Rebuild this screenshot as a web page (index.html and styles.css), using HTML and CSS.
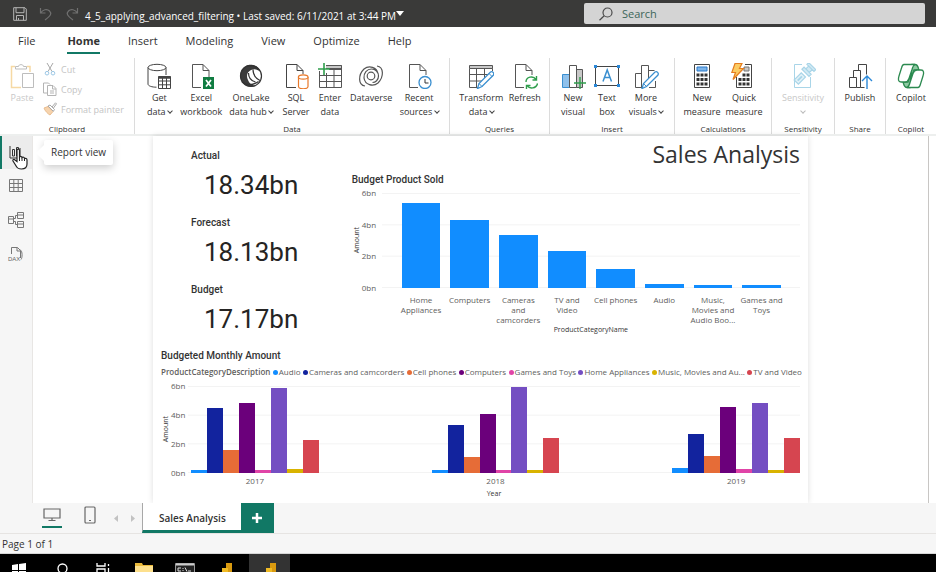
FILE: index.html
```html
<!DOCTYPE html>
<html lang="en">
<head>
    <meta charset="UTF-8">
    <meta name="viewport" content="width=device-width, initial-scale=1.0">
    <title>4_5_applying_advanced_filtering</title>
    <link rel="stylesheet" href="styles.css">
</head>
<body>

    <header class="titlebar">
        <button class="title-btn" aria-label="Save">
            <svg width="14" height="14" viewBox="0 0 14 14" fill="none" stroke="#b5b5b5"><path d="M.7.7h11.2l1.4 1.4v11.2H.7zM3 .7v5h8v-5M3.500 13.300V8.500h7v4.800M5.500 11v2"/></svg>
        </button>
        <button class="title-btn" aria-label="Undo">
            <svg width="14" height="14" viewBox="0 0 14 14" fill="none" stroke="#707070" stroke-width="1.200"><path d="M1.500 1v5h5M1.500 6C4 2.500 8 1.500 10.500 4s1.500 4.500-4.500 9"/></svg>
        </button>
        <button class="title-btn" aria-label="Redo">
            <svg width="14" height="14" viewBox="0 0 14 14" fill="none" stroke="#707070" stroke-width="1.200"><path d="M12.500 1v5h-5M12.500 6C10 2.500 6 1.500 3.500 4S2 8.500 8 13"/></svg>
        </button>
        <span class="file-name">4_5_applying_advanced_filtering • Last saved: 6/11/2021 at 3:44 PM</span>
        <svg class="caret" width="8" height="5" viewBox="0 0 8 5"><path d="M0 0h8L4 5z" fill="#fff"/></svg>
        <label class="search">
            <svg width="16" height="14" viewBox="0 0 16 14" fill="none" stroke="#4a4a4a" stroke-width="1.200"><circle cx="9.500" cy="5.500" r="4.500"/><path d="M6.200 8.800L1.500 13.300"/></svg>
            <input type="text" placeholder="Search" aria-label="Search">
        </label>
    </header>

    <nav class="menu">
        <a href="#">File</a>
        <a href="#" class="active">Home</a>
        <a href="#">Insert</a>
        <a href="#">Modeling</a>
        <a href="#">View</a>
        <a href="#">Optimize</a>
        <a href="#">Help</a>
    </nav>

    <div class="ribbon">
        <section class="group">
            <div class="tools clipboard">
                <button class="tool disabled">
                    <svg width="26" height="26" viewBox="0 0 26 26" fill="none"><path d="M12 24.500H2.500V3.500H6M18 3.500h3V9" stroke="#f6d9a4" stroke-width="1.500"/><path d="M6.500 6V3.500h3C9.500 1 14.500 1 14.500 3.500h3V6z" fill="#fff" stroke="#bdbdbd"/><path d="M13.500 10.500h11v14h-11z" fill="#fff" stroke="#bdbdbd"/></svg>
                    <span>Paste</span>
                </button>
                <div class="small-tools">
                    <button class="small-tool">
                        <svg width="14" height="14" viewBox="0 0 14 14" fill="none"><path d="M4 1l5 8.500M10 1L5 9.500" stroke="#a8a8a8"/><circle cx="4" cy="11.200" r="1.800" stroke="#9cc8e6"/><circle cx="10" cy="11.200" r="1.800" stroke="#9cc8e6"/></svg>
                        <span>Cut</span>
                    </button>
                    <button class="small-tool">
                        <svg width="14" height="14" viewBox="0 0 14 14" fill="none" stroke="#b4b4b4"><path d="M4 11H.5V1h5l1.500 1.500M4.500 3.500h5.500l3 3v7H4.500zM9.500 3.500V7H13M7 9h4M7 11h4"/></svg>
                        <span>Copy</span>
                    </button>
                    <button class="small-tool">
                        <svg width="14" height="14" viewBox="0 0 14 14" fill="none"><path d="M1 6l4-1.500 5 5L7 13C5 12 2 9 1 6z" fill="#f6d3ad" stroke="#e9bd90"/><path d="M5 4l2-1 4.500 4.500-1.200 1.800zM9 5l3.500-4.200 1 1L10.500 6" fill="#fff" stroke="#a8a8a8"/></svg>
                        <span>Format painter</span>
                    </button>
                </div>
            </div>
            <h2>Clipboard</h2>
        </section>

        <section class="group">
            <div class="tools data">
                <button class="tool">
                    <svg width="26" height="26" viewBox="0 0 26 26" fill="none" stroke="#444"><ellipse cx="11" cy="4.500" rx="9" ry="3.200"/><path d="M2 4.500v16.500c0 2 4 3.200 8.500 3.200M20 4.500V12"/><path d="M12.500 13.500h12v12h-12z" fill="#fff"/><path d="M12.500 14.500h12" stroke-width="2.500"/><path d="M12.500 18h12M12.500 21.800h12M16.500 14v11.500M20.500 14v11.500"/></svg>
                    <span>Get <b>data <i class="chev"></i></b></span>
                </button>
                <button class="tool">
                    <svg width="26" height="26" viewBox="0 0 26 26" fill="none" stroke="#555"><path d="M13 24.500H4.500v-23H15l6 6V14M15 1.500v6h6"/><path d="M15 14h11v12H15z" fill="#107c41" stroke="none"/><path d="M18 17l5 6.500M23 17l-5 6.500" stroke="#fff" stroke-width="1.700"/></svg>
                    <span>Excel workbook</span>
                </button>
                <button class="tool">
                    <svg width="26" height="26" viewBox="0 0 26 26" fill="none"><path d="M3 8C5 3.500 10 1 15 2c4 1 7 4 7.500 7-3-3-6.500-3.500-9.500-2-4 2-5 6-3 10 1 3 4 5.500 8 6-6 2-12 0-14.500-5C2 15 2 11 3 8z" fill="#3b3b3b"/><circle cx="13" cy="13" r="10.500" stroke="#333" stroke-width="1.200"/><path d="M8 3.500C12 1.500 18 3 20.500 7M10.500 10c0 5 3 8 7 9M15 6.500c0 5 3 9 7 11M4 19c4 3 10 4 16.500-.5" stroke="#333" stroke-width="1.200"/></svg>
                    <span>OneLake <b>data hub <i class="chev"></i></b></span>
                </button>
                <button class="tool">
                    <svg width="26" height="26" viewBox="0 0 26 26" fill="none" stroke="#444"><path d="M13 24.500H3.500v-23H14l6 6V11M14 1.500v6h6"/><g fill="#fff" stroke="#e8792b" stroke-width="1.200"><path d="M15.500 14v9.500c0 3 9.500 3 9.500 0V14"/><ellipse cx="20.200" cy="14" rx="4.800" ry="2.200"/></g></svg>
                    <span>SQL Server</span>
                </button>
                <button class="tool">
                    <svg width="26" height="26" viewBox="0 0 26 26" fill="none" stroke="#555"><path d="M9 2.500h15.500v3H9" fill="#c8c8c8"/><path d="M2.500 8v16.500h22v-22M2.500 12.500h22M2.500 18.500h22M9.500 10v14.500M17 5.500v19M12 6.500h12.500"/><path d="M7 0v12M1 6h12" stroke="#2f9e4c" stroke-width="1.600"/></svg>
                    <span>Enter data</span>
                </button>
                <button class="tool">
                    <svg width="26" height="26" viewBox="0 0 26 26" fill="none" stroke="#555" stroke-width="1.200"><circle cx="13" cy="13" r="3.800"/><path d="M19 3c7 1 7 11 1 17-5 4-13 2-14-5-.5-5 3-9 7.500-9 4 0 7 3 7 7s-3 6.500-6 6.500M7 23c-7-1-7-11-1-17 5-4 13-2 14 5"/></svg>
                    <span>Dataverse</span>
                </button>
                <button class="tool">
                    <svg width="26" height="26" viewBox="0 0 26 26" fill="none" stroke="#555"><path d="M12 24.500H3.500v-23H14l6 6V12M14 1.500v6h6"/><circle cx="19" cy="19.500" r="6" fill="#fff" stroke="#3a8fd0" stroke-width="1.300"/><path d="M19 16v4h3.500" stroke="#333"/></svg>
                    <span>Recent <b>sources <i class="chev"></i></b></span>
                </button>
            </div>
            <h2>Data</h2>
        </section>

        <section class="group">
            <div class="tools queries">
                <button class="tool">
                    <svg width="26" height="26" viewBox="0 0 26 26" fill="none" stroke="#555"><path d="M1.500 2.500h23v3h-23z" fill="#c8c8c8"/><path d="M1.500 5.500v19h9M24.500 5.500V8M1.500 11.500h19M1.500 18h13M8.500 5.500v19M16.500 5.500V15"/><path d="M9.500 25.500l1.500-5L22.500 9c2-1 4 1 3 3L14 23.500z" fill="#fff" stroke="#3a8fd0" stroke-width="1.300"/><path d="M11 20.500l3 3M21 10.500l3 3" stroke="#3a8fd0"/></svg>
                    <span>Transform <b>data <i class="chev"></i></b></span>
                </button>
                <button class="tool">
                    <svg width="26" height="26" viewBox="0 0 26 26" fill="none" stroke="#555"><path d="M12 24.500H3.500v-23H14l6 6V12M14 1.500v6h6"/><path d="M14 19c0-5 7-7 10-2.500M24.500 13v4h-4M25.500 20.500c-1 5-8 6-10.500 2M14.500 26.500v-4h4" stroke="#2f9e4c" stroke-width="1.400"/></svg>
                    <span>Refresh</span>
                </button>
            </div>
            <h2>Queries</h2>
        </section>

        <section class="group">
            <div class="tools insert">
                <button class="tool">
                    <svg width="26" height="26" viewBox="0 0 26 26" fill="none" stroke="#555"><path d="M2.500 11.500h7v13h-7z" fill="#8fc1ec" stroke="#3a8fd0"/><path d="M16.500 6.500h6v18h-6z" fill="#c8c8c8"/><path d="M9.500 2.500h7v22h-7z" fill="#fff"/><path d="M20 14v12M14 20h12" stroke="#2f9e4c" stroke-width="1.400"/></svg>
                    <span>New visual</span>
                </button>
                <button class="tool">
                    <svg width="26" height="26" viewBox="0 0 26 26" fill="none"><path d="M1.500 3.500h23v19h-23z" stroke="#444"/><path d="M0 2h3v3H0zM23 2h3v3h-3zM0 21h3v3H0zM23 21h3v3h-3z" fill="#2b88d8"/><path d="M9 18.500L13.200 7l4.300 11.500M10.500 14.500h5.500" stroke="#3a8fd0" stroke-width="1.500"/></svg>
                    <span>Text box</span>
                </button>
                <button class="tool">
                    <svg width="26" height="26" viewBox="0 0 26 26" fill="none" stroke="#555"><path d="M2.500 24.500v-14h6M8.500 24.500v-22h7v16M15.500 7.500h6M2.500 24.500H10M16 24.500h6.500V18"/><path d="M9 25.500l1.500-5L22 9c2-1 4 1 3 3L13.500 23.500z" fill="#fff" stroke="#3a8fd0" stroke-width="1.300"/><path d="M10.500 20.500l3 3" stroke="#3a8fd0"/></svg>
                    <span>More <b>visuals <i class="chev"></i></b></span>
                </button>
            </div>
            <h2>Insert</h2>
        </section>

        <section class="group">
            <div class="tools calc">
                <button class="tool">
                    <svg width="26" height="26" viewBox="0 0 26 26" fill="none"><path d="M5.500 1.500h15v23h-15z" stroke="#444"/><path d="M8 4h10v4H8z" fill="#7db5ea" stroke="#2b78c8"/><path d="M7.500 12h3M11.500 12h3M15.500 12h3M7.500 16.500h3M11.500 16.500h3M15.500 16.500h3M7.500 21h3M11.500 21h3M15.500 21h3" stroke="#333" stroke-width="3"/></svg>
                    <span>New measure</span>
                </button>
                <button class="tool">
                    <svg width="26" height="26" viewBox="0 0 26 26" fill="none"><path d="M14 1.500h6.500v23h-15V14" stroke="#444"/><path d="M13 4h5v4h-5z" fill="#c8c8c8" stroke="#777"/><path d="M11.500 12h3M15.500 12h3M7.500 16.500h3M11.500 16.500h3M15.500 16.500h3M7.500 21h3M11.500 21h3M15.500 21h3" stroke="#333" stroke-width="3"/><path d="M4 .5h7L8.500 5.500h4L2 16.500l2.500-7H.8z" fill="#fbcb62" stroke="#e57d1f" stroke-width="1.200"/></svg>
                    <span>Quick measure</span>
                </button>
            </div>
            <h2>Calculations</h2>
        </section>

        <section class="group">
            <div class="tools single">
                <button class="tool disabled">
                    <svg width="26" height="26" viewBox="0 0 26 26" fill="none" stroke="#a9d5e8"><path d="M12 1.500H4.500v23h16V14"/><g transform="rotate(-45 13 13)" stroke-width="1.200"><path d="M4 9.500h10v6H4z" fill="#e3f2f8"/><path d="M6 12.500h6" stroke-width="2"/><path d="M17 7.500h3v10h-3zM20 10h4v5h-4M24 7.500h2.500v10H24z" fill="#d3eaf4"/></g></svg>
                    <span>Sensitivity <i class="chev below"></i></span>
                </button>
            </div>
            <h2>Sensitivity</h2>
        </section>

        <section class="group">
            <div class="tools single">
                <button class="tool">
                    <svg width="26" height="26" viewBox="0 0 26 26" fill="none" stroke="#444"><path d="M2.500 14.500h7v10h-7zM6.500 14.500v-7h7v17H9.500M11.500 7.500v-6h8v10M13.500 24.500h4"/><path d="M20 26V13M15 18l5-5 5 5" stroke="#2b88d8" stroke-width="1.400"/></svg>
                    <span>Publish</span>
                </button>
            </div>
            <h2>Share</h2>
        </section>

        <section class="group">
            <div class="tools single">
                <button class="tool">
                    <svg width="28" height="26" viewBox="0 0 28 26" fill="none" stroke="#2c8a50" stroke-width="1.300"><path d="M15 1.500h3c2 0 3 2 3.500 4l.5 1.500h-5l-3 9z" fill="#8fcaa3"/><path d="M13 24.500h-3c-2 0-3-2-3.500-4L6 19h5l3-9z" fill="#8fcaa3"/><path d="M7 1.500h11c-2 1-2.500 3-3 5l-3 9c-1 3-2 3.500-4 3.500H4c-3 0-3-3-2-6l2.500-8C5 3 6 1.500 7 1.500z" fill="#fff"/><path d="M21 24.500H10c2-1 2.500-3 3-5l3-9c1-3 2-3.500 4-3.500h4c3 0 3 3 2 6l-2.500 8c-.5 2-1.500 3.500-2.500 3.500z" fill="#fff"/></svg>
                    <span>Copilot</span>
                </button>
            </div>
            <h2>Copilot</h2>
        </section>
    </div>

    <main class="workspace">
        <nav class="views">
            <button class="view active" aria-label="Report view">
                <svg width="16" height="16" viewBox="0 0 16 16" fill="none" stroke="#333"><path d="M2 1v12h12M4.500 4.500h2V11h-2zM8.500 2.500h2V11h-2zM12 3v8"/></svg>
                <svg class="cursor" width="18" height="22" viewBox="0 0 18 22"><path d="M5 1.500c1.500-1 2.500 0 2.500 1V9c1-1 2.500-.5 2.500.5 1-.7 2.500-.2 2.500 1 1.200-.5 2.500 0 2.500 1.500v4c0 3-1.500 5-5.500 5-3.500 0-4.500-1-6-4l-2.500-4c-.5-1.500 1-2 2-1L5 13.500V1.500z" fill="#fff" stroke="#222" stroke-width="1.200"/><path d="M7.500 9v4M10 9.500V13M12.500 10.500V13" stroke="#222"/></svg>
                <span class="tooltip">Report view</span>
            </button>
            <button class="view" aria-label="Table view">
                <svg width="16" height="16" viewBox="0 0 16 16" fill="none" stroke="#777"><path d="M1.500 1.500h13v12h-13zM1.500 5.500h13M1.500 9.500h13M5.800 1.500v12M10.200 1.500v12"/></svg>
            </button>
            <button class="view" aria-label="Model view">
                <svg width="16" height="16" viewBox="0 0 16 16" fill="none" stroke="#777"><path d="M.5 4.500h5v7h-5zM.5 7h5M9.500.5h6v6h-6zM9.500 3h6M9.500 9.500h6v6h-6zM9.500 12h6M5.500 6.500h2v-3h2M5.500 9.500h2v3h2"/></svg>
            </button>
            <button class="view" aria-label="DAX query view">
                <svg width="16" height="16" viewBox="0 0 16 16" fill="none" stroke="#777"><path d="M3.500 8V1.500h6l3 3V12M9 1.500V5h3.500M12.500 4c2 1 2 8 .5 9.500"/><text x="0" y="14.500" font-size="6" font-family="Liberation Sans, sans-serif" fill="#666" stroke="none">DAX</text></svg>
            </button>
        </nav>

        <div class="stage">
            <article class="report">
                <div class="kpis">
                    <section class="kpi"><h3>Actual</h3><p>18.34bn</p></section>
                    <section class="kpi"><h3>Forecast</h3><p>18.13bn</p></section>
                    <section class="kpi"><h3>Budget</h3><p>17.17bn</p></section>
                </div>

                <div class="top-right">
                    <h1>Sales Analysis</h1>
                    <section class="chart">
                        <h3>Budget Product Sold</h3>
                        <div class="plot sold">
                            <span class="y-title">Amount</span>
                            <div class="ticks"><span>6bn</span><span>4bn</span><span>2bn</span><span>0bn</span></div>
                            <div class="area">
                                <div class="bar audio" style="height: 89%"></div>
                                <div class="bar audio" style="height: 72%"></div>
                                <div class="bar audio" style="height: 56%"></div>
                                <div class="bar audio" style="height: 39%"></div>
                                <div class="bar audio" style="height: 20%"></div>
                                <div class="bar audio" style="height: 4%"></div>
                                <div class="bar audio" style="height: 3%"></div>
                                <div class="bar audio" style="height: 3%"></div>
                            </div>
                            <div class="x-labels">
                                <span>Home Appliances</span>
                                <span>Computers</span>
                                <span>Cameras and camcorders</span>
                                <span>TV and<br>Video</span>
                                <span>Cell phones</span>
                                <span>Audio</span>
                                <span>Music, Movies and Audio Boo...</span>
                                <span>Games and Toys</span>
                            </div>
                            <span class="x-title">ProductCategoryName</span>
                        </div>
                    </section>
                </div>

                <section class="chart monthly">
                    <h3>Budgeted Monthly Amount</h3>
                    <ul class="legend">
                        <li class="legend-title">ProductCategoryDescription</li>
                        <li><i class="dot audio"></i>Audio</li>
                        <li><i class="dot cameras"></i>Cameras and camcorders</li>
                        <li><i class="dot phones"></i>Cell phones</li>
                        <li><i class="dot computers"></i>Computers</li>
                        <li><i class="dot games"></i>Games and Toys</li>
                        <li><i class="dot home"></i>Home Appliances</li>
                        <li><i class="dot music"></i>Music, Movies and Au...</li>
                        <li><i class="dot tv"></i>TV and Video</li>
                    </ul>
                    <div class="plot years">
                        <span class="y-title">Amount</span>
                        <div class="ticks"><span>6bn</span><span>4bn</span><span>2bn</span><span>0bn</span></div>
                        <div class="area">
                            <div class="cluster">
                                <div class="bar audio" style="height: 3%"></div>
                                <div class="bar cameras" style="height: 75%"></div>
                                <div class="bar phones" style="height: 26%"></div>
                                <div class="bar computers" style="height: 81%"></div>
                                <div class="bar games" style="height: 3%"></div>
                                <div class="bar home" style="height: 98%"></div>
                                <div class="bar music" style="height: 5%"></div>
                                <div class="bar tv" style="height: 38%"></div>
                            </div>
                            <div class="cluster">
                                <div class="bar audio" style="height: 4%"></div>
                                <div class="bar cameras" style="height: 55%"></div>
                                <div class="bar phones" style="height: 18%"></div>
                                <div class="bar computers" style="height: 68%"></div>
                                <div class="bar games" style="height: 3%"></div>
                                <div class="bar home" style="height: 99%"></div>
                                <div class="bar music" style="height: 4%"></div>
                                <div class="bar tv" style="height: 40%"></div>
                            </div>
                            <div class="cluster">
                                <div class="bar audio" style="height: 6%"></div>
                                <div class="bar cameras" style="height: 45%"></div>
                                <div class="bar phones" style="height: 20%"></div>
                                <div class="bar computers" style="height: 76%"></div>
                                <div class="bar games" style="height: 5%"></div>
                                <div class="bar home" style="height: 80%"></div>
                                <div class="bar music" style="height: 3%"></div>
                                <div class="bar tv" style="height: 40%"></div>
                            </div>
                        </div>
                        <div class="x-labels"><span>2017</span><span>2018</span><span>2019</span></div>
                        <span class="x-title">Year</span>
                    </div>
                </section>
            </article>
        </div>
    </main>

    <div class="pages">
        <div class="layouts">
            <button class="layout active" aria-label="Desktop layout">
                <svg width="18" height="14" viewBox="0 0 18 14" fill="none" stroke="#666" stroke-width="1.200"><path d="M1 1h16v9H1zM5.500 12.500h7M9 10v2.500"/></svg>
            </button>
            <button class="layout" aria-label="Mobile layout">
                <svg width="12" height="18" viewBox="0 0 12 18" fill="none" stroke="#666" stroke-width="1.200"><rect x="1" y="1" width="10" height="16" rx="1"/><path d="M5 14.500h2"/></svg>
            </button>
            <button class="step" aria-label="Previous page"><svg width="4" height="7" viewBox="0 0 4 7"><path d="M4 0v7L0 3.500z" fill="#c2c2c2"/></svg></button>
            <button class="step" aria-label="Next page"><svg width="4" height="7" viewBox="0 0 4 7"><path d="M0 0v7l4-3.500z" fill="#c2c2c2"/></svg></button>
        </div>
        <button class="page-tab">Sales Analysis</button>
        <button class="add-page" aria-label="New page">
            <svg width="10" height="10" viewBox="0 0 10 10" stroke="#fff" stroke-width="2.500"><path d="M5 0v10M0 5h10"/></svg>
        </button>
    </div>

    <footer class="status">Page 1 of 1</footer>

    <div class="taskbar">
        <button class="task" aria-label="Start"><svg width="14" height="14" viewBox="0 0 14 14" fill="#fff"><path d="M0 2l6-1v6H0zM7 1l7-1v7H7zM0 8h6v6H0zM7 8h7v6H7z"/></svg></button>
        <button class="task" aria-label="Search"><svg width="14" height="14" viewBox="0 0 14 14" fill="none" stroke="#fff" stroke-width="1.300"><circle cx="7.500" cy="5.500" r="4.500"/><path d="M4 9l-3 4"/></svg></button>
        <button class="task" aria-label="Task view"><svg width="14" height="14" viewBox="0 0 14 14" fill="none" stroke="#fff" stroke-width="1.300"><path d="M1 0v3h8V0M1 14V6h8v8zM12.500 1v2M12.500 5v9"/></svg></button>
        <button class="task" aria-label="File Explorer"><svg width="18" height="14" viewBox="0 0 18 14"><path d="M0 0h7l1 2h10v12H0z" fill="#e9b93b"/><path d="M0 3h18v11H0z" fill="#fde08d"/></svg></button>
        <button class="task" aria-label="Command Prompt"><svg width="20" height="14" viewBox="0 0 20 14"><path d="M.5.500h19v13H.5z" fill="#222" stroke="#999"/><path d="M1 1.500h18" stroke="#ccc" stroke-width="2"/><path d="M3 5h3M3 5v3h3M8 5v1M8 7v1M10 4.500l2 4M13 8h3" stroke="#ddd" fill="none"/></svg></button>
        <button class="task" aria-label="Power BI"><svg width="14" height="16" viewBox="0 0 14 16"><path d="M7 0h6v16H7z" fill="#d99a10"/><path d="M3 5h6v11H3z" fill="#f0bb25"/><path d="M0 9h5v7H0z" fill="#fbd75c"/></svg></button>
        <button class="task active" aria-label="Power BI"><svg width="14" height="16" viewBox="0 0 14 16"><path d="M7 0h6v16H7z" fill="#d99a10"/><path d="M3 5h6v11H3z" fill="#f0bb25"/><path d="M0 9h5v7H0z" fill="#fbd75c"/></svg></button>
    </div>

</body>
</html>
```
FILE: styles.css
```css
* {
    box-sizing: border-box;
}

body {
    margin: 0;
    height: 100vh;
    display: flex;
    flex-direction: column;
    overflow: hidden;
    font-family: "Open Sans", "Noto Sans", sans-serif;
    font-size: 10px;
    color: #333;
    background: #fff;
}

h1, h2, h3, p, ul {
    margin: 0;
    padding: 0;
    font-weight: normal;
}

button {
    margin: 0;
    padding: 0;
    border: 0;
    background: none;
    font: inherit;
    color: inherit;
    cursor: pointer;
}

svg {
    display: block;
    flex: none;
}

/* Title bar */
.titlebar {
    display: flex;
    align-items: center;
    flex: none;
    height: 27px;
    padding: 0 11px 0 13px;
    background: #3a3a39;
    color: #fff;
}

.title-btn {
    margin-right: 12px;
}

.title-btn:nth-child(3) {
    margin-right: 6px;
}

.file-name {
    padding-top: 4px;
    margin-right: 4px;
    white-space: nowrap;
}

.caret {
    margin-left: -4px;
}

.search {
    display: flex;
    align-items: center;
    gap: 8px;
    width: 341px;
    height: 21px;
    margin-left: auto;
    padding: 0 14px;
    border-radius: 2px;
    background: #d4d4d4;
}

.search input {
    flex: 1;
    min-width: 0;
    padding: 0;
    border: 0;
    outline: 0;
    background: none;
    font: inherit;
    font-size: 11px;
}

.search input::placeholder {
    color: #3c6659;
    opacity: 1;
}

/* Menu */
.menu {
    display: flex;
    flex: none;
    gap: 28px;
    height: 31px;
    padding: 4px 18px;
    font-size: 11px;
    line-height: 20px;
}

.menu a {
    color: #333;
    text-decoration: none;
}

.menu a:first-child {
    margin-right: 4px;
}

.menu .active {
    height: 23px;
    border-bottom: 2px solid #117865;
    font-weight: bold;
}

/* Ribbon */
.ribbon {
    display: grid;
    grid-template-columns: 135fr 315fr 100fr 125fr 97fr 63fr 51fr 50fr;
    flex: none;
    height: 78px;
    border-bottom: 2px solid #edefee;
}

.group {
    display: flex;
    flex-direction: column;
    min-width: 0;
    border-right: 1px solid #dcdcdc;
}

.group:last-child {
    border-right: 0;
}

.group h2 {
    font-size: 8px;
    line-height: 10px;
    text-align: center;
}

.tools {
    display: grid;
    flex: 1;
    padding: 5px 6px 0;
}

.data {
    grid-template-columns: 41fr 43fr 57fr 33fr 35fr 48fr 48fr;
    padding-left: 4px;
}

.queries {
    grid-template-columns: 50fr 36fr;
}

.insert {
    grid-template-columns: 34fr 34fr 44fr;
}

.calc {
    grid-template-columns: 1fr 1fr;
}

.single {
    padding: 5px 0 0;
}

.tool {
    display: flex;
    flex-direction: column;
    align-items: center;
    gap: 2px;
    min-width: 0;
    height: 58px;
    font-size: 9px;
    line-height: 14px;
}

.tool span {
    width: min-content;
}

.tool b {
    display: block;
    font-weight: normal;
    white-space: nowrap;
}

.disabled {
    color: #c8c8c8;
}

.chev {
    display: inline-block;
    width: 4px;
    height: 4px;
    margin-bottom: 2px;
    border: solid #444;
    border-width: 0 1px 1px 0;
    transform: rotate(45deg);
}

.chev.below {
    display: block;
    margin: 4px auto;
    border-color: #bbb;
}

.clipboard {
    grid-template-columns: 30px 1fr;
    gap: 6px;
    padding-left: 7px;
}

.small-tools {
    display: flex;
    flex-direction: column;
}

.small-tool {
    display: flex;
    align-items: center;
    gap: 4px;
    height: 20px;
    padding-bottom: 8px;
    font-size: 9px;
    color: #c4c4c4;
    white-space: nowrap;
}

/* Views and report */
.workspace {
    display: flex;
    flex: 1;
    min-height: 0;
}

.views {
    width: 33px;
    flex: none;
    border-right: 1px solid #e8e6e4;
    background: #f6f6f6;
}

.view {
    position: relative;
    display: flex;
    align-items: center;
    justify-content: center;
    width: 100%;
    height: 34px;
}

.view.active {
    height: 33px;
    padding-right: 2px;
    border-left: 2px solid #117865;
    background: #ececec;
}

.cursor {
    position: absolute;
    left: 10px;
    top: 12px;
}

.tooltip {
    position: absolute;
    z-index: 1;
    left: 42px;
    top: 4px;
    padding: 0 7px;
    border-radius: 2px;
    background: #fff;
    box-shadow: 0 3px 8px #0003;
    line-height: 25px;
    white-space: nowrap;
}

.tooltip::before {
    content: "";
    position: absolute;
    left: -8px;
    top: 5px;
    border: 8px solid transparent;
    border-left: 0;
    border-right-color: #fff;
}

.stage {
    flex: 1;
    min-width: 0;
    margin-right: 7px;
    padding: 0 120px;
    border-right: 1px solid #c8c6c4;
}

.report {
    display: grid;
    grid-template-columns: 186fr 454fr;
    grid-template-rows: 213px 1fr;
    height: 100%;
    padding: 0 8px;
    box-shadow: 0 0 6px #0002;
}

.report h3 {
    font-family: Roboto, sans-serif;
    font-size: 10px;
    font-weight: 500;
    line-height: 14px;
}

.kpis {
    display: flex;
    flex-direction: column;
    gap: 9px;
    padding: 13px 0 0 30px;
}

.kpi p {
    padding-left: 13px;
    font-family: Roboto, sans-serif;
    font-size: 26px;
    line-height: 44px;
    color: #252423;
}

h1 {
    font-size: 23px;
    line-height: 37px;
    text-align: right;
}

.top-right {
    padding-left: 5px;
}

.plot {
    display: grid;
    font-size: 8px;
    line-height: 10px;
    color: #605e5c;
}

.sold {
    grid-template-columns: 10px 20px 1fr;
    grid-template-rows: 105px auto 10px;
    padding-top: 1px;
}

.years {
    grid-template-columns: 10px 17px 1fr;
    grid-template-rows: 97px 11px 10px;
}

.y-title {
    align-self: center;
    writing-mode: vertical-rl;
    transform: rotate(180deg);
    font-size: 7px;
    color: #333;
}

.ticks {
    display: flex;
    flex-direction: column;
    justify-content: space-between;
}

.area {
    display: flex;
    align-items: flex-end;
    margin: 5px 0;
    background: linear-gradient(#f3f3f3 1px, transparent 1px) 0 0 / 100% calc((100% - 1px) / 3);
}

.bar {
    flex: 1;
}

.sold .area {
    gap: 10px;
    padding: 0 19px 0 20px;
}

.years .area {
    justify-content: space-between;
    padding-left: 3px;
}

.cluster {
    display: flex;
    align-items: flex-end;
    width: 21%;
    height: 100%;
}

.x-labels {
    grid-column: 3;
    display: flex;
    text-align: center;
}

.sold .x-labels {
    height: 32px;
    padding: 2px 14px 0 15px;
}

.sold .x-labels span {
    flex: 1 0 0;
    min-width: 0;
}

.years .x-labels {
    justify-content: space-between;
    padding-left: 3px;
    line-height: 6px;
}

.years .x-labels span {
    width: 21%;
}

.x-title {
    grid-column: 3;
    font-size: 7px;
    text-align: center;
    color: #333;
}

.monthly {
    grid-column: 1 / 3;
    min-width: 0;
}

.legend {
    display: flex;
    justify-content: space-between;
    margin: 4px -2px 4px 0;
    font-size: 8px;
    line-height: 10px;
    color: #605e5c;
    list-style: none;
    white-space: nowrap;
}

.legend li {
    display: flex;
    align-items: center;
    gap: 1px;
}

.legend .legend-title {
    font-weight: 600;
}

.dot {
    width: 5px;
    height: 5px;
    border-radius: 50%;
}

.audio { background-color: #118dff; }
.cameras { background-color: #12239e; }
.phones { background-color: #e66c37; }
.computers { background-color: #6b007b; }
.games { background-color: #e044a7; }
.home { background-color: #744ec2; }
.music { background-color: #d9b300; }
.tv { background-color: #d64550; }

/* Page tabs */
.pages {
    display: flex;
    flex: none;
    height: 30px;
    margin-left: 33px;
    background: #f6f6f6;
    box-shadow: -33px 0 #f6f6f6;
}

.layouts {
    display: flex;
    align-items: center;
    padding: 0 7px 4px 9px;
}

.layout {
    display: flex;
    align-items: center;
    justify-content: center;
    width: 20px;
    height: 23px;
    margin-right: 18px;
    border-bottom: 2px solid transparent;
}

.layout + .layout {
    margin: 0 14px 0 0;
}

.step {
    padding-top: 4px;
}

.step + .step {
    margin-left: 13px;
}

.page-tab {
    padding: 2px 15px 0 16px;
    border-left: 1px solid #a8a8a8;
    border-bottom: 3px solid #117865;
    background: #fff;
    font-weight: 600;
}

.layout.active {
    border-bottom-color: #117865;
}

.add-page {
    display: flex;
    align-items: center;
    justify-content: center;
    width: 33px;
    background: #117865;
}

.status {
    flex: none;
    height: 21px;
    padding-left: 2px;
    border-top: 1px solid #e6e4e2;
    border-bottom: 1px solid #d6d6d6;
    background: #f6f6f6;
    line-height: 21px;
}

/* Windows taskbar */
.taskbar {
    display: flex;
    flex: none;
    height: 18px;
    overflow: hidden;
    background: #000;
}

.task {
    display: flex;
    justify-content: center;
    width: 41px;
    height: 30px;
    padding-top: 9px;
}

.task:first-child {
    padding-right: 4px;
}

.task.active {
    margin-left: 3px;
    background: #333;
}
```
